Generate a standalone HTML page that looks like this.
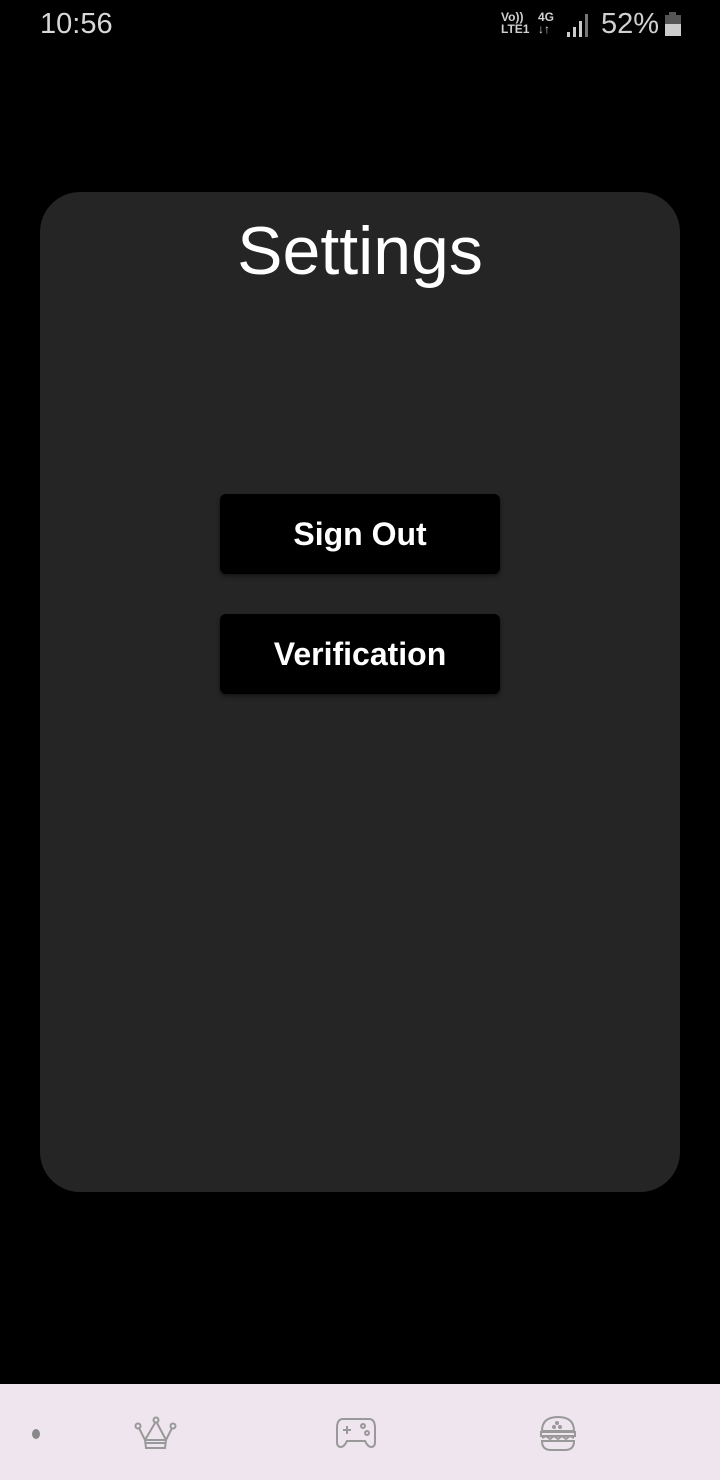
<!DOCTYPE html>
<html><head><meta charset="utf-8"><style>
*{margin:0;padding:0;box-sizing:border-box}
body{width:720px;height:1480px;background:#000;position:relative;overflow:hidden;font-family:"Liberation Sans",sans-serif}
.time{position:absolute;left:40px;top:8px;color:#d8d8d8;font-size:29px}
.card{position:absolute;left:40px;top:192px;width:640px;height:1000px;background:#252525;border-radius:40px}
.title{position:absolute;top:212px;left:0;width:720px;text-align:center;color:#fff;font-size:68px}
.btn{position:absolute;left:220px;width:280px;height:80px;background:#000;border-radius:6px;color:#fff;font-weight:bold;font-size:32px;text-align:center;line-height:80px;box-shadow:0 2px 4px rgba(0,0,0,.5)}
.nav{position:absolute;left:0;top:1384px;width:720px;height:96px;background:#efe5ee}
.sb{position:absolute;color:#d0d0d0;font-weight:bold}
</style></head><body>
<div class="time">10:56</div>
<div class="sb" style="left:501px;top:11px;font-size:12px;line-height:12px">Vo))<br>LTE1</div>
<div class="sb" style="left:538px;top:11px;font-size:12px;line-height:12px">4G<br>↓↑</div>
<svg style="position:absolute;left:566px;top:12px" width="24" height="26"><rect x="1" y="20" width="3" height="5" fill="#ccc"/><rect x="7" y="15" width="3" height="10" fill="#ccc"/><rect x="13" y="9" width="3" height="16" fill="#ccc"/><rect x="19" y="2" width="3" height="23" fill="#777"/></svg>
<div class="sb" style="left:601px;top:8px;font-size:29px;font-weight:normal">52%</div>
<svg style="position:absolute;left:664px;top:12px" width="18" height="25"><rect x="5" y="0" width="7" height="3" fill="#555"/><rect x="1" y="3" width="16" height="9" fill="#555"/><rect x="1" y="12" width="16" height="12" fill="#ccc"/></svg>
<div class="card"></div>
<div class="title">Settings</div>
<div class="btn" style="top:494px">Sign Out</div>
<div class="btn" style="top:614px">Verification</div>
<div class="nav">
<svg style="position:absolute;left:31px;top:44px" width="10" height="12"><ellipse cx="5" cy="6" rx="4" ry="5" fill="#888"/></svg>
<svg style="position:absolute;left:134px;top:32px" width="44" height="34" fill="none" stroke="#999" stroke-width="2"><circle cx="22" cy="4" r="2.5"/><circle cx="4" cy="10" r="2.5"/><circle cx="39" cy="10" r="2.5"/><path d="M5 12 L11 24 L21 7 M23 7 L32 24 L38 12 M11 24 L12 32 L31 32 L32 24 Z M12 27 L31 27"/></svg>
<svg style="position:absolute;left:335px;top:32px" width="42" height="34" fill="none" stroke="#999" stroke-width="2"><path d="M8 3 H34 Q40 3 40 12 V26 Q40 31 36 31 Q33 31 30 25 H12 Q9 31 6 31 Q2 31 2 26 V12 Q2 3 8 3 Z"/><path d="M8 14 H16 M12 10 V18"/><circle cx="28" cy="10" r="2"/><circle cx="32" cy="17" r="2"/></svg>
<svg style="position:absolute;left:539px;top:31px" width="38" height="37" fill="none" stroke="#999" stroke-width="2"><path d="M3 16 Q3 2 19 2 Q35 2 35 16 Z"/><path d="M2 17 H36 V21 H2 Z"/><path d="M3 23 L7 21 L11 24 L15 21 L19 24 L23 21 L27 24 L31 21 L35 23"/><path d="M3 26 H35 Q35 35 26 35 H12 Q3 35 3 26 Z"/><circle cx="18" cy="8" r="1" fill="#999"/><circle cx="15" cy="12" r="1" fill="#999"/><circle cx="21" cy="12" r="1" fill="#999"/></svg>
</div>
</body></html>
